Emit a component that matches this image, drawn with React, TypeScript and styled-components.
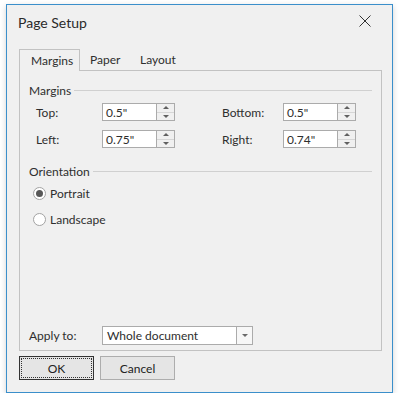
import styled, { createGlobalStyle } from "styled-components";

const GlobalStyle = createGlobalStyle`
  html, body {
    margin: 0;
    padding: 0;
    background: #ffffff;
  }
  body {
    font-family: Lato, "Noto Sans", sans-serif;
    font-size: 12px;
    color: #2e2e2e;
  }
`;

const Page = styled.div`
  padding: 4px 0 0 6px;
`;

const Window = styled.div`
  width: 385px;
  height: 387px;
  border: 1px solid #3b8fcb;
  background: #f0f0f0;
  box-shadow: 0 2px 6px rgba(0, 0, 0, 0.18);
  display: flex;
  flex-direction: column;
`;

const TitleBar = styled.div`
  height: 32px;
  padding: 0 0 0 11px;
  display: flex;
  align-items: center;
  justify-content: space-between;
`;

const Title = styled.div`
  font-size: 14px;
  color: #2a2a2a;
  margin-top: 2px;
`;

const CloseButton = styled.div`
  width: 46px;
  height: 32px;
  display: flex;
  align-items: center;
  justify-content: center;
  margin-right: 4px;
`;

const Body = styled.div`
  flex: 1;
  display: flex;
  flex-direction: column;
  padding: 12px 10px 0 12px;
`;

const TabStrip = styled.div`
  display: flex;
  height: 21px;
  position: relative;
  z-index: 1;
`;

const Tab = styled.div<{ $active?: boolean; $width: number }>`
  box-sizing: border-box;
  display: flex;
  align-items: center;
  width: ${(p) => p.$width}px;
  padding: 0 0 1px ${(p) => (p.$active ? "11px" : "9px")};
  border: 1px solid ${(p) => (p.$active ? "#c2c2c2" : "transparent")};
  border-bottom: none;
  background: #f0f0f0;
  height: ${(p) => (p.$active ? "22px" : "21px")};
`;

const Panel = styled.div`
  height: 281px;
  box-sizing: border-box;
  border: 1px solid #c2c2c2;
  display: flex;
  flex-direction: column;
  padding: 11px 9px 5px 9px;
`;

const GroupHeader = styled.div`
  display: flex;
  align-items: center;
  gap: 3px;
  height: 16px;
  &::after {
    content: "";
    flex: 1;
    height: 1px;
    background: #d0d0d0;
    margin-top: 1px;
  }
`;

const MarginGrid = styled.div`
  display: grid;
  grid-template-columns: 66px 120px 61px 73px;
  row-gap: 9px;
  padding: 5px 0 0 7px;
  align-items: center;
`;

const Label = styled.div`
  white-space: nowrap;
`;

const Spinner = styled.div`
  display: flex;
  width: 73px;
  height: 18px;
`;

const SpinInput = styled.div`
  flex: 1;
  box-sizing: border-box;
  border: 1px solid #ababab;
  background: #fff;
  padding: 0 0 0 3px;
  display: flex;
  align-items: center;
`;

const SpinButtons = styled.div`
  width: 18px;
  display: flex;
  flex-direction: column;
  box-sizing: border-box;
  border: 1px solid #ababab;
  border-left: none;
  background: #f0f0f0;
`;

const SpinHalf = styled.div<{ $bottom?: boolean }>`
  flex: 1;
  display: flex;
  align-items: center;
  justify-content: center;
  border-top: ${(p) => (p.$bottom ? "1px solid #d6d6d6" : "none")};
`;

const Arrow = styled.div<{ $up?: boolean }>`
  width: 0;
  height: 0;
  border-left: 3.5px solid transparent;
  border-right: 3.5px solid transparent;
  ${(p) =>
    p.$up
      ? "border-bottom: 3px solid #606060;"
      : "border-top: 3px solid #606060;"}
`;

const OrientationHeader = styled(GroupHeader)`
  margin-top: 15px;
`;

const RadioList = styled.div`
  display: flex;
  flex-direction: column;
  gap: 12px;
  padding: 7px 0 0 4px;
`;

const RadioRow = styled.div`
  display: flex;
  align-items: center;
  gap: 4px;
  height: 14px;
`;

const RadioCircle = styled.div<{ $checked?: boolean }>`
  width: 13px;
  height: 13px;
  box-sizing: border-box;
  border-radius: 50%;
  border: 1px solid #a3a3a3;
  background: #fff;
  display: flex;
  align-items: center;
  justify-content: center;
  &::after {
    content: "";
    width: 7px;
    height: 7px;
    border-radius: 50%;
    background: ${(p) => (p.$checked ? "#575757" : "transparent")};
  }
`;

const Spacer = styled.div`
  flex: 1;
`;

const ApplyRow = styled.div`
  display: flex;
  align-items: center;
`;

const ApplyLabel = styled.div`
  width: 73px;
`;

const Combo = styled.div`
  width: 151px;
  height: 19px;
  box-sizing: border-box;
  border: 1px solid #ababab;
  background: #fff;
  display: flex;
`;

const ComboText = styled.div`
  flex: 1;
  padding-left: 4px;
  display: flex;
  align-items: center;
`;

const ComboButton = styled.div`
  width: 15px;
  border-left: 1px solid #ababab;
  display: flex;
  align-items: center;
  justify-content: center;
  background: #f7f7f7;
`;

const SmallArrow = styled.div`
  width: 0;
  height: 0;
  border-left: 3px solid transparent;
  border-right: 3px solid transparent;
  border-top: 3px solid #6a6a6a;
`;

const ButtonRow = styled.div`
  display: flex;
  gap: 6px;
  padding-top: 5px;
`;

const Button = styled.div<{ $default?: boolean }>`
  width: 75px;
  height: 24px;
  box-sizing: border-box;
  border: 1px solid ${(p) => (p.$default ? "#333" : "#adadad")};
  background: #e5e5e5;
  display: flex;
  align-items: center;
  justify-content: center;
  position: relative;
  color: #222;
  ${(p) =>
    p.$default &&
    `&::before {
      content: "";
      position: absolute;
      inset: 1px;
      border: 1px dotted #333;
    }`}
`;

function SpinBox({ value }: { value: string }) {
  return (
    <Spinner>
      <SpinInput>{value}</SpinInput>
      <SpinButtons>
        <SpinHalf>
          <Arrow $up />
        </SpinHalf>
        <SpinHalf $bottom>
          <Arrow />
        </SpinHalf>
      </SpinButtons>
    </Spinner>
  );
}

export default function App() {
  return (
    <Page>
      <GlobalStyle />
      <Window>
        <TitleBar>
          <Title>Page Setup</Title>
          <CloseButton>
            <svg width="12" height="12" viewBox="0 0 12 12">
              <path d="M0.5 0.5 L11.5 11.5 M11.5 0.5 L0.5 11.5" stroke="#333" strokeWidth="1" />
            </svg>
          </CloseButton>
        </TitleBar>
        <Body>
          <TabStrip>
            <Tab $active $width={61}>Margins</Tab>
            <Tab $width={50}>Paper</Tab>
            <Tab $width={60}>Layout</Tab>
          </TabStrip>
          <Panel>
            <GroupHeader>Margins</GroupHeader>
            <MarginGrid>
              <Label>Top:</Label>
              <SpinBox value='0.5"' />
              <Label>Bottom:</Label>
              <SpinBox value='0.5"' />
              <Label>Left:</Label>
              <SpinBox value='0.75"' />
              <Label>Right:</Label>
              <SpinBox value='0.74"' />
            </MarginGrid>
            <OrientationHeader>Orientation</OrientationHeader>
            <RadioList>
              <RadioRow>
                <RadioCircle $checked />
                Portrait
              </RadioRow>
              <RadioRow>
                <RadioCircle />
                Landscape
              </RadioRow>
            </RadioList>
            <Spacer />
            <ApplyRow>
              <ApplyLabel>Apply to:</ApplyLabel>
              <Combo>
                <ComboText>Whole document</ComboText>
                <ComboButton>
                  <SmallArrow />
                </ComboButton>
              </Combo>
            </ApplyRow>
          </Panel>
          <ButtonRow>
            <Button $default>OK</Button>
            <Button>Cancel</Button>
          </ButtonRow>
        </Body>
      </Window>
    </Page>
  );
}
